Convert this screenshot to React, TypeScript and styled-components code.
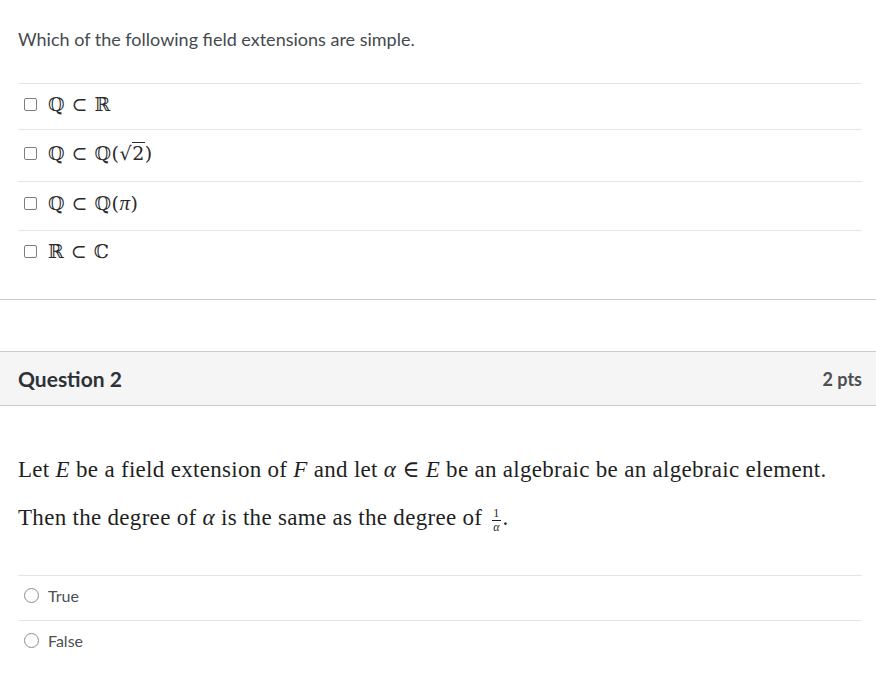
import React from 'react';
import styled, {createGlobalStyle} from 'styled-components';

const GlobalStyle = createGlobalStyle`
    html, body {
        margin: 0;
        padding: 0;
        background: #ffffff;
    }
`;

const Page = styled.div`
    width: 876px;
    min-height: 689px;
    background: #ffffff;
    font-family: Lato, "Open Sans", sans-serif;
    color: #3f4446;
`;

const QuestionBody = styled.div`
    padding: 0 14px 0 18px;
`;

const Prompt = styled.p`
    margin: 0;
    padding-top: 27px;
    height: 83px;
    box-sizing: border-box;
    font-size: 18px;
    line-height: 24px;
    color: #444a4e;
`;

const MathPrompt = styled.p`
    margin: 0;
    font-family: "Liberation Serif", "DejaVu Serif", serif;
    font-size: 23px;
    letter-spacing: 0.3px;
    line-height: 48px;
    color: #1f1f1f;
`;

const MathPromptBlock = styled.div`
    padding-top: 40px;
    height: 169px;
    box-sizing: border-box;
`;

const AnswerList = styled.div`
    margin: 0;
`;

const AnswerRow = styled.div<{$h: number; $gap: number}>`
    display: flex;
    align-items: center;
    gap: ${p => p.$gap}px;
    height: ${p => p.$h}px;
    box-sizing: border-box;
    padding: 0 0 5px 6px;
    border-top: 1px solid #e3e5e6;
`;

const Checkbox = styled.span`
    width: 11px;
    height: 11px;
    border: 1px solid #7c7f81;
    border-radius: 2px;
    flex: none;
`;

const Radio = styled.span`
    width: 13px;
    height: 13px;
    border: 1px solid #8a8d8f;
    border-radius: 50%;
    flex: none;
`;

const MathText = styled.span`
    font-family: "DejaVu Serif", "Liberation Serif", serif;
    font-size: 19px;
    color: #2a2a2a;
    letter-spacing: 0.5px;
`;

const Pi = styled.span`
    font-family: "Liberation Serif", serif;
    font-style: italic;
    font-size: 21px;
`;

const LabelText = styled.span`
    font-size: 16px;
    color: #4b5053;
`;

const Divider = styled.div<{$gap: number}>`
    margin-top: ${p => p.$gap}px;
    border-top: 1px solid #c7cbce;
`;

const Spacer = styled.div<{$h: number}>`
    height: ${p => p.$h}px;
`;

const QuestionHeader = styled.div`
    display: flex;
    align-items: center;
    justify-content: space-between;
    height: 55px;
    box-sizing: border-box;
    padding: 0 14px 0 18px;
    background: #f5f5f5;
    border-top: 1px solid #c7cbce;
    border-bottom: 1px solid #c7cbce;
`;

const QuestionTitle = styled.h2`
    margin: 0;
    font-size: 21px;
    font-weight: 700;
    color: #2d3236;
`;

const Points = styled.span`
    font-size: 18px;
    font-weight: 700;
    color: #4b5053;
`;

const Ital = styled.i`
    font-style: italic;
`;

const Frac = styled.span`
    display: inline-flex;
    flex-direction: column;
    align-items: center;
    vertical-align: 8px;
    font-size: 12px;
    line-height: 13px;
    margin: 0 2px 0 4px;
`;

const Num = styled.span`
    border-bottom: 1px solid #1f1f1f;
    padding: 0 1px;
`;

const Sqrt = styled.span`
    display: inline-flex;
    align-items: flex-start;
`;

const SqrtArg = styled.span`
    border-top: 1px solid #2a2a2a;
    line-height: 1.1;
`;

const App = () => (
    <Page>
        <GlobalStyle />
        <QuestionBody>
            <Prompt>Which of the following field extensions are simple.</Prompt>
            <AnswerList>
                <AnswerRow $h={46} $gap={11}>
                    <Checkbox />
                    <MathText>ℚ ⊂ ℝ</MathText>
                </AnswerRow>
                <AnswerRow $h={52} $gap={11}>
                    <Checkbox />
                    <MathText>ℚ ⊂ ℚ(<Sqrt>√<SqrtArg>2</SqrtArg></Sqrt>)</MathText>
                </AnswerRow>
                <AnswerRow $h={49} $gap={11}>
                    <Checkbox />
                    <MathText>ℚ ⊂ ℚ(<Pi>π</Pi>)</MathText>
                </AnswerRow>
                <AnswerRow $h={46} $gap={11}>
                    <Checkbox />
                    <MathText>ℝ ⊂ ℂ</MathText>
                </AnswerRow>
            </AnswerList>
        </QuestionBody>
        <Divider $gap={23} />
        <Spacer $h={51} />
        <QuestionHeader>
            <QuestionTitle>Question 2</QuestionTitle>
            <Points>2 pts</Points>
        </QuestionHeader>
        <QuestionBody>
            <MathPromptBlock>
                <MathPrompt>
                    Let <Ital>E</Ital> be a field extension of <Ital>F</Ital> and let <Ital>α</Ital> ∈ <Ital>E</Ital> be an algebraic be an algebraic element.
                </MathPrompt>
                <MathPrompt>
                    Then the degree of <Ital>α</Ital> is the same as the degree of <Frac><Num>1</Num><Ital>α</Ital></Frac>.
                </MathPrompt>
            </MathPromptBlock>
            <AnswerList>
                <AnswerRow $h={45} $gap={9}>
                    <Radio />
                    <LabelText>True</LabelText>
                </AnswerRow>
                <AnswerRow $h={45} $gap={9}>
                    <Radio />
                    <LabelText>False</LabelText>
                </AnswerRow>
            </AnswerList>
        </QuestionBody>
    </Page>
);

export default App;
